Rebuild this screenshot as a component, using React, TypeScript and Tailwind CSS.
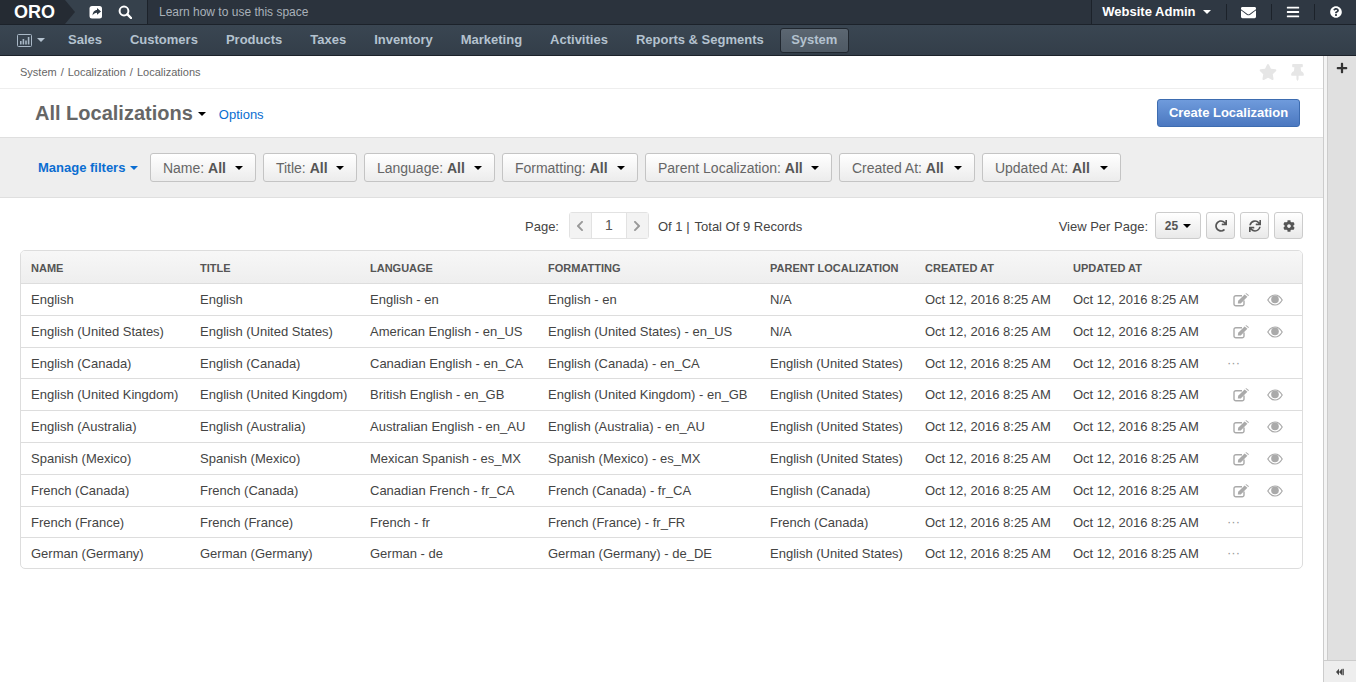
import type { ReactNode } from "react";
import {
  FaBars,
  FaChevronLeft,
  FaChevronRight,
  FaCog,
  FaEnvelope,
  FaPlus,
  FaQuestionCircle,
  FaRedo,
  FaStar,
  FaSync,
  FaThumbtack,
} from "react-icons/fa";

const NAV = ["Sales", "Customers", "Products", "Taxes", "Inventory", "Marketing", "Activities", "Reports & Segments"];
const FILTERS = [
  ["Name", "w-[106px]"],
  ["Title", "w-[94px]"],
  ["Language", "w-[131px]"],
  ["Formatting", "w-[136px]"],
  ["Parent Localization", "w-[187px]"],
  ["Created At", "w-[136px]"],
  ["Updated At", "w-[139px]"],
];
const DATE = "Oct 12, 2016 8:25 AM";

const ROWS = [
  ["English", "English", "English - en", "English - en", "N/A", true],
  ["English (United States)", "English (United States)", "American English - en_US", "English (United States) - en_US", "N/A", true],
  ["English (Canada)", "English (Canada)", "Canadian English - en_CA", "English (Canada) - en_CA", "English (United States)", false],
  ["English (United Kingdom)", "English (United Kingdom)", "British English - en_GB", "English (United Kingdom) - en_GB", "English (United States)", true],
  ["English (Australia)", "English (Australia)", "Australian English - en_AU", "English (Australia) - en_AU", "English (United States)", true],
  ["Spanish (Mexico)", "Spanish (Mexico)", "Mexican Spanish - es_MX", "Spanish (Mexico) - es_MX", "English (United States)", true],
  ["French (Canada)", "French (Canada)", "Canadian French - fr_CA", "French (Canada) - fr_CA", "English (Canada)", true],
  ["French (France)", "French (France)", "French - fr", "French (France) - fr_FR", "French (Canada)", false],
  ["German (Germany)", "German (Germany)", "German - de", "German (Germany) - de_DE", "English (United States)", false],
] as const;

const HEADERS = [
  ["Name", "w-[169px]"],
  ["Title", "w-[170px]"],
  ["Language", "w-[178px]"],
  ["Formatting", "w-[222px]"],
  ["Parent Localization", "w-[155px]"],
  ["Created At", "w-[148px]"],
  ["Updated At", "w-[149px]"],
];

function Caret({ className = "border-t-black" }: { className?: string }) {
  return <span className={`inline-block h-0 w-0 border-x-4 border-t-4 border-x-transparent ${className}`} />;
}

function ToolButton({ children }: { children: ReactNode }) {
  return (
    <button className="flex h-[27px] w-[29px] items-center justify-center rounded-[3px] border border-[#ccc] bg-gradient-to-b from-white to-[#e9e9e9] text-[#555]">
      {children}
    </button>
  );
}

function ShareIcon() {
  return (
    <svg width="14" height="14" viewBox="0 0 14 14" className="ml-[14px]">
      <rect x="0.5" y="1" width="12.5" height="12.5" rx="2.5" fill="#fff" />
      <path d="M8 3 L12 6.4 L8 9.8 V7.8 C6 7.8 4.6 8.6 3.6 10.6 C3.6 7.4 5.4 5 8 5 Z" fill="#2f3a45" />
    </svg>
  );
}

function SearchIcon() {
  return (
    <svg width="14" height="14" viewBox="0 0 14 14" className="ml-[15px]">
      <circle cx="6" cy="6" r="4.4" fill="none" stroke="#fff" strokeWidth="2" />
      <path d="M9.4 9.4 L13 13" stroke="#fff" strokeWidth="2.4" strokeLinecap="round" />
    </svg>
  );
}

function ChartIcon() {
  return (
    <svg width="15" height="13" viewBox="0 0 15 13">
      <rect x="0.5" y="0.5" width="14" height="12" rx="1" fill="none" stroke="#a9b8c6" />
      <path d="M3 7h1.6v3.5H3zM5.6 5h1.6v5.5H5.6zM8.2 6.5h1.6v4H8.2zM10.8 3h1.6v7.5h-1.6z" fill="#a9b8c6" />
    </svg>
  );
}

function EditIcon() {
  return (
    <svg width="17" height="14" viewBox="0 0 17 14">
      <path d="M11 7.5V11a1.8 1.8 0 0 1-1.8 1.8H2.8A1.8 1.8 0 0 1 1 11V4.5a1.8 1.8 0 0 1 1.8-1.8H9" fill="none" stroke="#aaa" strokeWidth="1.4" />
      <path d="M5.2 7.8 L11.6 1.4 L14.4 3.8 L7.8 10.4 L4.8 10.6 Z" fill="#aaa" />
      <path d="M12.4 0.6 L13.4 0.2 L16 2.2 L15.2 3 Z" fill="#aaa" />
    </svg>
  );
}

function EyeIcon() {
  return (
    <svg width="16" height="12" viewBox="0 0 16 12">
      <path d="M0.8 6 C3 2.2 5.4 1 8 1 C10.6 1 13 2.2 15.2 6 C13 9.8 10.6 11 8 11 C5.4 11 3 9.8 0.8 6 Z" fill="none" stroke="#aaa" strokeWidth="1.2" />
      <circle cx="8" cy="5.4" r="3.8" fill="#aaa" />
    </svg>
  );
}

function CollapseIcon() {
  return (
    <svg width="8" height="8" viewBox="0 0 8 8">
      <path d="M0 4 L3 0.8 V7.2 Z M3 4 L6 0.8 V7.2 Z" fill="#444" />
      <rect x="6.4" y="0.8" width="1.4" height="6.4" fill="#444" />
    </svg>
  );
}

function TopBar() {
  return (
    <div className="flex h-[25px] border-b border-[#1c222a] bg-[#2b333d]">
      <div className="relative flex w-[148px] items-center border-r border-[#1c222a] bg-[#36414c]">
        <div className="flex h-full w-[65px] items-center bg-[#252b33] pl-[14px] text-[18px] font-bold text-white">ORO</div>
        <div className="h-0 w-0 border-y-[12px] border-l-[10px] border-y-transparent border-l-[#252b33]" />
        <ShareIcon />
        <SearchIcon />
      </div>
      <div className="flex-1 pl-[11px] text-[12px] leading-[24px] text-[#a9b1b9]">Learn how to use this space</div>
      <div className="flex items-center border-l border-[#1c222a] bg-[#2f3843]">
        <div className="flex items-center gap-[7px] pl-[10.5px] pr-[15.5px] text-[13px] font-bold text-white">
          Website Admin
          <Caret className="border-t-white" />
        </div>
        <div className="flex h-[16px] w-[45px] items-center justify-center border-l border-[#1c222a] pr-[2px]">
          <FaEnvelope className="text-[15px] text-white" />
        </div>
        <div className="flex h-[16px] w-[43px] items-center justify-center border-l border-[#1c222a]">
          <FaBars className="text-[14px] text-white" />
        </div>
        <div className="flex h-[16px] w-[42px] items-center justify-center border-l border-[#1c222a]">
          <FaQuestionCircle className="text-[12px] text-white" />
        </div>
      </div>
    </div>
  );
}

function NavBar() {
  return (
    <div className="flex h-[31px] items-center border-b border-[#1c222a] bg-gradient-to-b from-[#3a4652] to-[#333e49] text-[13px] font-bold text-[#b4c2cf]">
      <div className="flex w-[54px] items-center gap-[5px] pl-[17px]">
        <ChartIcon />
        <Caret className="border-t-[#b4c2cf]" />
      </div>
      <div className="flex gap-[28px] pl-[14px]">
        {NAV.map((item) => (
          <span key={item}>{item}</span>
        ))}
      </div>
      <span className="ml-[16px] flex h-[25px] w-[69px] items-center justify-center rounded-[3px] border border-[#20272f] bg-gradient-to-b from-[#5c6772] to-[#4e5964]">
        System
      </span>
    </div>
  );
}

function FilterBar() {
  return (
    <div className="flex h-[61px] items-center border-y border-[#dfdfdf] bg-[#eeeeee] pl-[38px]">
      <span className="flex items-center gap-[5px] text-[13px] font-bold text-[#0a6dd1]">
        Manage filters
        <Caret className="border-t-[#0a6dd1]" />
      </span>
      <div className="ml-[12px] flex gap-[7px]">
        {FILTERS.map(([name, width]) => (
          <button
            key={name}
            className={`${width} flex h-[29px] items-center justify-between rounded-[3px] border border-[#c4c4c4] bg-gradient-to-b from-white to-[#ececec] pl-[11.5px] pr-[12px] text-[14px] text-[#666]`}
          >
            <span className="mt-[1px] whitespace-nowrap">
              {name}: <b className="text-[#555]">All</b>
            </span>
            <Caret />
          </button>
        ))}
      </div>
    </div>
  );
}

function Pager() {
  return (
    <div className="flex h-[52px] items-center pl-[525px] pr-[20px] pt-[3px] text-[13px] text-[#444]">
      <span className="mt-[2px]">Page:</span>
      <div className="ml-[10px] flex h-[27px] w-[80px] rounded-[3px] border border-[#e2e2e2] text-[#999]">
        <span className="flex w-[21px] items-center justify-center bg-[#f3f3f3]">
          <FaChevronLeft className="text-[12px]" />
        </span>
        <span className="flex flex-1 items-center justify-center border-x border-[#e2e2e2] text-[14px] text-[#555]">1</span>
        <span className="flex w-[21px] items-center justify-center bg-[#f3f3f3]">
          <FaChevronRight className="text-[12px]" />
        </span>
      </div>
      <span className="ml-[9px] mt-[2px]">Of 1 |</span>
      <span className="ml-[5px] mt-[2px]">Total Of 9 Records</span>
      <span className="ml-auto mt-[2px]">View Per Page:</span>
      <button className="ml-[7px] flex h-[27px] w-[46px] items-center justify-center gap-[5px] rounded-[3px] border border-[#ccc] bg-gradient-to-b from-white to-[#e9e9e9] text-[12px] font-bold text-[#555]">
        25
        <Caret />
      </button>
      <div className="ml-[5px] flex gap-[5px]">
        <ToolButton>
          <FaRedo className="text-[12px]" />
        </ToolButton>
        <ToolButton>
          <FaSync className="text-[12px]" />
        </ToolButton>
        <ToolButton>
          <FaCog className="text-[12px]" />
        </ToolButton>
      </div>
    </div>
  );
}

function DataTable() {
  return (
    <div className="mx-[20px] w-[1283px] overflow-hidden rounded-[5px] border border-[#dddddd]">
      <table className="w-full table-fixed border-collapse text-left text-[13px] text-[#444]">
        <thead>
          <tr className="h-[32px] bg-gradient-to-b from-[#f7f7f7] to-[#eeeeee]">
            {HEADERS.map(([label, width]) => (
              <th key={label} className={`${width} pl-[10px] pt-[2px] text-[11px] font-bold uppercase text-[#555]`}>
                {label}
              </th>
            ))}
            <th />
          </tr>
        </thead>
        <tbody>
          {ROWS.map((row) => (
            <tr key={row[0]} className={`border-t border-[#dddddd] ${row[5] ? "h-[32px]" : "h-[31px]"}`}>
              {row.slice(0, 5).map((cell, i) => (
                <td key={i} className="whitespace-nowrap pl-[10px] pt-[2px]">
                  {cell}
                </td>
              ))}
              <td className="whitespace-nowrap pl-[10px] pt-[2px]">{DATE}</td>
              <td className="whitespace-nowrap pl-[10px] pt-[2px]">{DATE}</td>
              <td>
                {row[5] ? (
                  <div className="mt-[1px] flex items-center gap-[17px] pl-[21px]">
                    <EditIcon />
                    <EyeIcon />
                  </div>
                ) : (
                  <span className="pl-[15px] text-[#999]">···</span>
                )}
              </td>
            </tr>
          ))}
        </tbody>
      </table>
    </div>
  );
}

export default function App() {
  return (
    <div className="flex h-[682px] w-[1356px] flex-col overflow-hidden bg-white font-['Liberation_Sans',Arial,sans-serif]">
      <TopBar />
      <NavBar />
      <div className="flex flex-1">
        <main className="w-[1323px]">
          <div className="flex h-[33px] items-center justify-between border-b border-[#eeeeee] pl-[20px] pr-[17px] text-[11px] text-[#666]">
            <div className="flex gap-[4px]">
              <span>System</span>
              <span>/</span>
              <span>Localization</span>
              <span>/</span>
              <span>Localizations</span>
            </div>
            <div className="flex items-center gap-[12px] text-[#e6e6e6]">
              <FaStar className="text-[18px]" />
              <FaThumbtack className="text-[17px]" />
            </div>
          </div>
          <div className="flex h-[48px] items-center justify-between pl-[35px] pr-[23px]">
            <div className="flex items-center">
              <span className="text-[20px] font-bold text-[#666]">All Localizations</span>
              <Caret className="ml-[5px] mt-[2px] border-t-black" />
              <span className="ml-[13px] mt-[4px] text-[13px] text-[#0a6dd1]">Options</span>
            </div>
            <button className="h-[28px] w-[143px] rounded-[3px] border border-[#3d6cb0] bg-gradient-to-b from-[#6f9bdc] to-[#4b78c0] text-[13px] font-bold text-white">
              Create Localization
            </button>
          </div>
          <FilterBar />
          <Pager />
          <DataTable />
        </main>
        <aside className="flex w-[33px] flex-col border-l border-[#cccccc]">
          <div className="flex flex-1">
            <div className="w-[4px] border-r border-[#cccccc] bg-[#f4f4f4]" />
            <div className="flex-1 bg-[#e0e0e0]">
              <div className="flex h-[24px] items-center justify-center">
                <FaPlus className="text-[12px] text-[#333]" />
              </div>
            </div>
          </div>
          <div className="flex h-[22px] items-center justify-center border-t border-[#cccccc] bg-[#eeeeee]">
            <CollapseIcon />
          </div>
        </aside>
      </div>
    </div>
  );
}
